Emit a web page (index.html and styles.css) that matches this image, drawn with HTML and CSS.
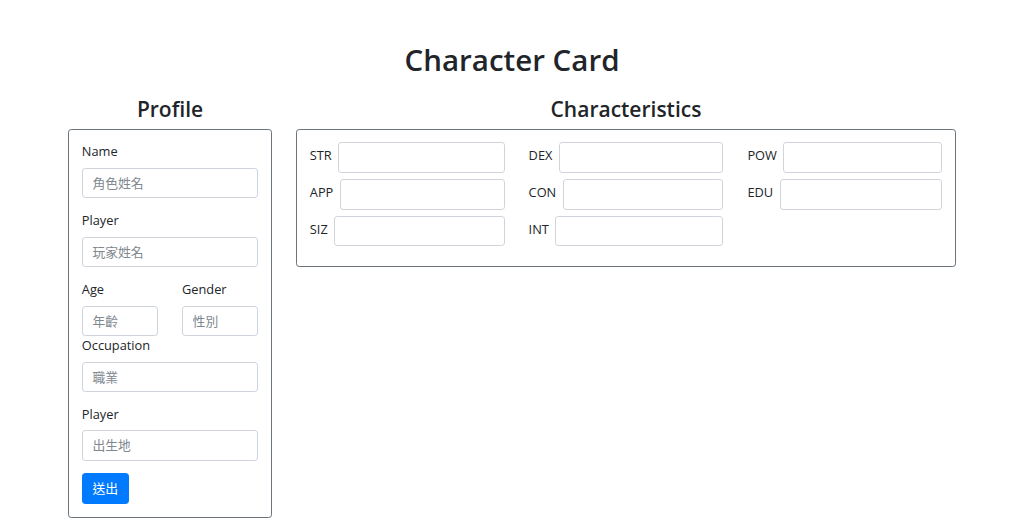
FILE: index.html
```html
<!DOCTYPE html>
<html lang="zh-Hant">
<head>
<meta charset="utf-8">
<title>Character Card</title>
<link rel="stylesheet" href="styles.css">
</head>
<body>
<main class="page">
  <h1 class="title">Character Card</h1>
  <div class="layout">
    <section class="col-profile">
      <h2 class="section-title">Profile</h2>
      <form class="card profile-card">
        <div class="group">
          <label class="label">Name</label>
          <input class="input" type="text" placeholder="角色姓名">
        </div>
        <div class="group">
          <label class="label">Player</label>
          <input class="input" type="text" placeholder="玩家姓名">
        </div>
        <div class="pair">
          <div class="pair-item">
            <label class="label">Age</label>
            <input class="input" type="text" placeholder="年齡">
          </div>
          <div class="pair-item">
            <label class="label">Gender</label>
            <input class="input" type="text" placeholder="性別">
          </div>
        </div>
        <div class="group">
          <label class="label">Occupation</label>
          <input class="input" type="text" placeholder="職業">
        </div>
        <div class="group">
          <label class="label">Player</label>
          <input class="input" type="text" placeholder="出生地">
        </div>
        <button class="btn" type="button">送出</button>
      </form>
    </section>
    <section class="col-chars">
      <h2 class="section-title">Characteristics</h2>
      <div class="card chars-card">
        <div class="stat-grid">
          <div class="stat"><label class="stat-label">STR</label><input class="input" type="text"></div>
          <div class="stat"><label class="stat-label">DEX</label><input class="input" type="text"></div>
          <div class="stat"><label class="stat-label">POW</label><input class="input" type="text"></div>
          <div class="stat"><label class="stat-label">APP</label><input class="input" type="text"></div>
          <div class="stat"><label class="stat-label">CON</label><input class="input" type="text"></div>
          <div class="stat"><label class="stat-label">EDU</label><input class="input" type="text"></div>
          <div class="stat"><label class="stat-label">SIZ</label><input class="input" type="text"></div>
          <div class="stat"><label class="stat-label">INT</label><input class="input" type="text"></div>
        </div>
      </div>
    </section>
  </div>
</main>
</body>
</html>
```

FILE: styles.css
```css
* {
  box-sizing: border-box;
}

html, body {
  margin: 0;
  padding: 0;
  background: #ffffff;
}

body {
  font-family: "Open Sans", "Noto Sans CJK TC", sans-serif;
  color: #212529;
  font-size: 12.8px;
  line-height: 1.5;
}

.page {
  width: 888px;
  margin: 0 auto;
  padding-top: 42px;
}

.title {
  margin: 0 0 20px;
  text-align: center;
  font-size: 29.5px;
  font-weight: 600;
  line-height: 1.2;
}

.layout {
  display: flex;
  gap: 24px;
  align-items: flex-start;
}

.col-profile {
  flex: 0 0 204px;
  min-width: 0;
}

.col-chars {
  flex: 1 1 0;
  min-width: 0;
}

.section-title {
  margin: 0 0 6px;
  text-align: center;
  font-size: 21px;
  font-weight: 600;
  line-height: 1.2;
}

.card {
  border: 1px solid #6c757d;
  border-radius: 3.2px;
  padding: 12.8px;
  background: #fff;
}

.profile-card {
  display: flex;
  flex-direction: column;
}

.group {
  margin-bottom: 12.8px;
}

.label {
  display: block;
  margin-bottom: 6.4px;
  line-height: 19.2px;
}

.input {
  display: block;
  width: 100%;
  height: 30.4px;
  padding: 4.8px 9.6px;
  font-family: "Open Sans", "Noto Sans CJK TC", sans-serif;
  font-size: 12.8px;
  line-height: 1.5;
  color: #495057;
  background: #fff;
  border: 1px solid #ced4da;
  border-radius: 3.2px;
  outline: none;
}

.input::placeholder {
  color: #80878e;
  opacity: 1;
}

.pair {
  display: grid;
  grid-template-columns: minmax(0, 1fr) minmax(0, 1fr);
  column-gap: 24px;
}

.btn {
  align-self: flex-start;
  height: 30.4px;
  padding: 4.8px 9.6px;
  font-family: "Open Sans", "Noto Sans CJK TC", sans-serif;
  font-size: 12.8px;
  line-height: 1.5;
  color: #fff;
  background: #007bff;
  border: 1px solid #007bff;
  border-radius: 3.2px;
}

.stat-grid {
  display: grid;
  grid-template-columns: repeat(3, minmax(0, 1fr));
  column-gap: 24px;
}

.stat {
  display: flex;
  align-items: center;
  margin-bottom: 6.4px;
  min-width: 0;
}

.stat-label {
  flex: 0 0 auto;
  margin-right: 6.4px;
  line-height: 19.2px;
  position: relative;
  top: -2px;
}

.stat .input {
  flex: 1 1 auto;
  width: auto;
  min-width: 0;
}
```
